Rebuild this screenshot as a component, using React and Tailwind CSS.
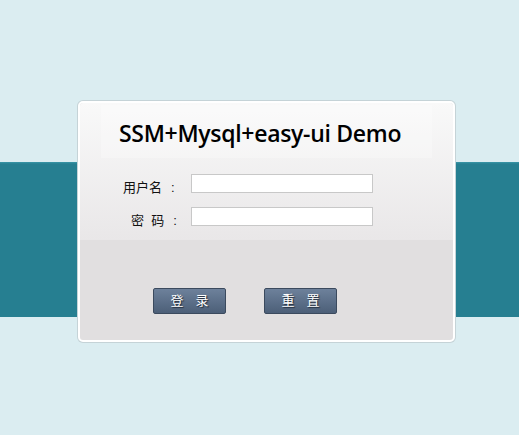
export default function App() {
  return (
    <div className="h-[435px] w-[519px] overflow-hidden bg-[linear-gradient(to_bottom,#dbedf1_162px,#3a96a8_162px,#267f91_164px,#267f91_317px,#dbedf1_317px)] pt-[101px] font-['Liberation_Sans','Noto_Sans_CJK_SC',sans-serif]">
      <div className="ml-[78px] h-[241px] w-[377px] rounded-[5px] border-2 border-white bg-[#e1dfe0] shadow-[0_0_0_1px_#c5d3d7] overflow-hidden">
        <div className="h-[137px] bg-[linear-gradient(to_bottom,#f9f9f9,#e9e7e8)] pt-[2px]">
          <div className="mx-[21px] h-[53px] bg-white/25 pl-[18px] pt-[14px]">
            <h1 className="font-['Open_Sans',sans-serif] text-[23px] font-semibold leading-[28px] tracking-[-0.3px] text-black">
              SSM+Mysql+easy-ui Demo
            </h1>
          </div>
          <div className="mt-[16px] flex flex-col gap-[14px] pl-[43px]">
            <div className="flex h-[19px] items-start">
              <span className="mt-[4px] w-[68px] text-[13px] leading-[19px] text-[#111]">
                用户名<span className="ml-[9px]">:</span>
              </span>
              <input
                type="text"
                className="h-[19px] w-[182px] border border-[#c8c8c8] bg-white outline-none"
              />
            </div>
            <div className="flex h-[19px] items-start">
              <span className="mt-[4px] w-[68px] pl-[8px] text-[13px] leading-[19px] text-[#111]">
                密&nbsp;&nbsp;码<span className="ml-[9px]">:</span>
              </span>
              <input
                type="password"
                className="h-[19px] w-[182px] border border-[#c8c8c8] bg-white outline-none"
              />
            </div>
          </div>
        </div>
        <div className="flex gap-[38px] pl-[73px] pt-[48px]">
          <button className="h-[26px] w-[73px] rounded-[2px] border border-[#3b4a5e] bg-[linear-gradient(to_bottom,#6d819b,#4c5f78)] text-[13px] tracking-[12px] pl-[12px] text-white [text-shadow:1px_1px_1px_#1d2633]">
            登录
          </button>
          <button className="h-[26px] w-[73px] rounded-[2px] border border-[#3b4a5e] bg-[linear-gradient(to_bottom,#6d819b,#4c5f78)] text-[13px] tracking-[12px] pl-[12px] text-white [text-shadow:1px_1px_1px_#1d2633]">
            重置
          </button>
        </div>
      </div>
    </div>
  );
}
